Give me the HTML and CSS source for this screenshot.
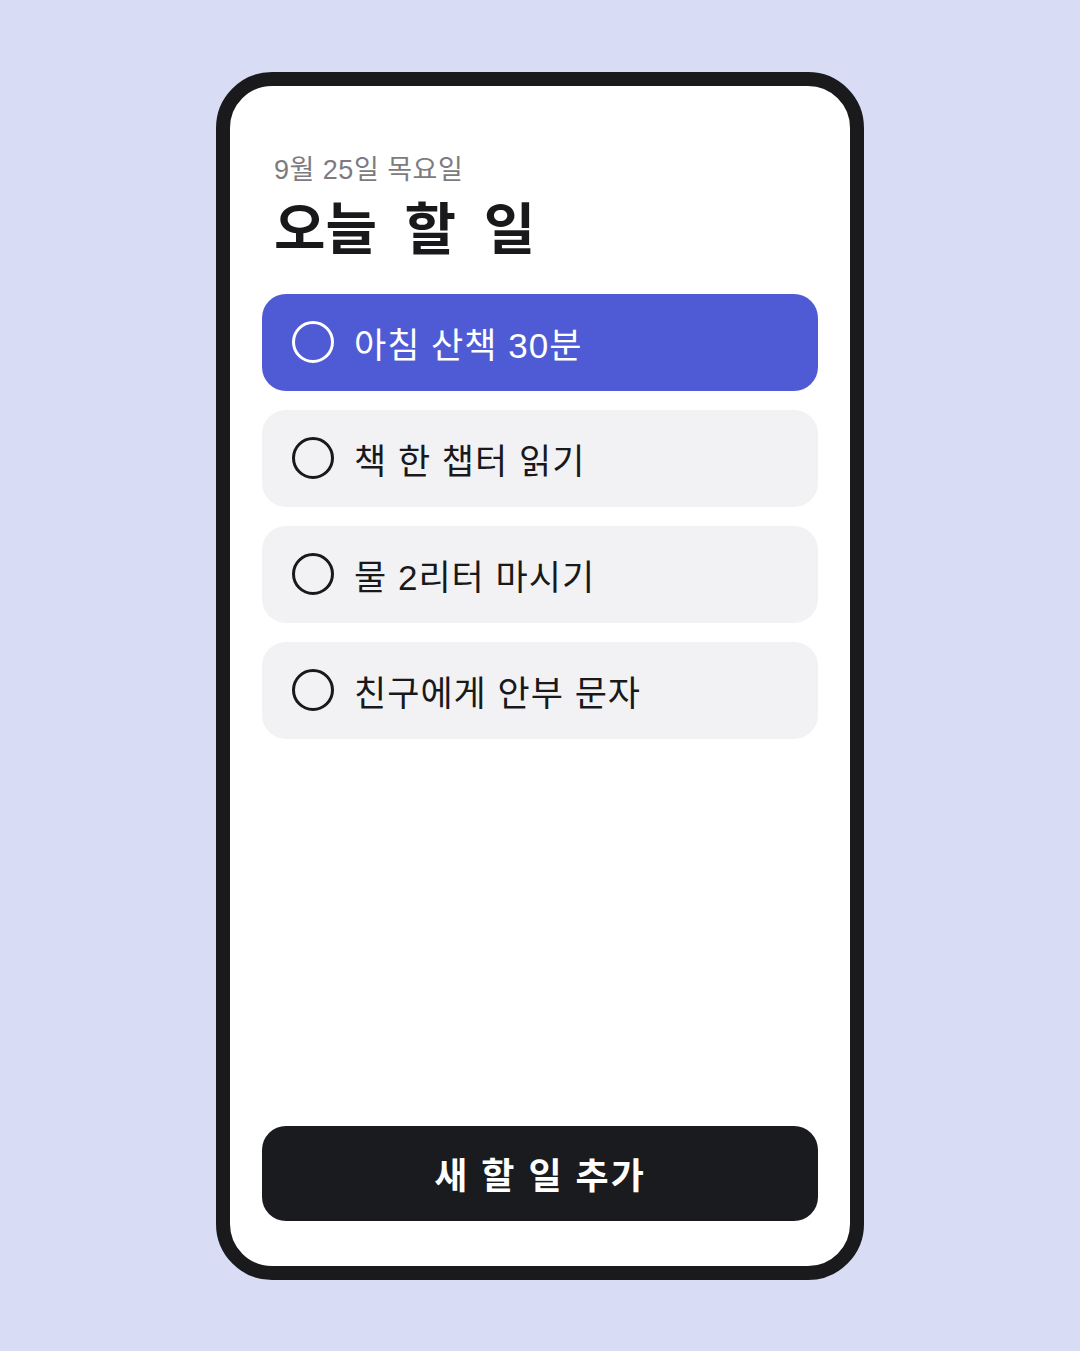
FILE: index.html
```html
<!DOCTYPE html>
<html lang="ko">
<head>
  <meta charset="UTF-8" />
  <meta name="viewport" content="width=device-width, initial-scale=1.0"/>
  <title>오늘 할 일</title>
  <link rel="stylesheet" href="styles.css">
</head>
<body>

  <!-- Phone frame -->
  <div class="phone">
    <div class="header">
      <div class="date">9월 25일 목요일</div>
      <h1 class="title">오늘 할 일</h1>
    </div>

    <!-- Todo list -->
    <ul class="todos">
      <li class="todo active"><span class="check"></span>아침 산책 30분</li>
      <li class="todo"><span class="check"></span>책 한 챕터 읽기</li>
      <li class="todo"><span class="check"></span>물 2리터 마시기</li>
      <li class="todo"><span class="check"></span>친구에게 안부 문자</li>
    </ul>

    <button class="add-btn">새 할 일 추가</button>
  </div>

</body>
</html>
```

FILE: styles.css
```css
body {
  font-family: "Liberation Sans", "Noto Sans CJK KR", sans-serif;
  display: flex;
  justify-content: center;
  align-items: center;
  height: 100vh;
  margin: 0;
  background: #d8dcf5;
  overflow: hidden;
}

.phone {
  box-sizing: border-box;
  width: 648px;
  height: 1208px;
  background: #fff;
  border: 14px solid #1a1a1c;
  border-radius: 56px;
  padding: 68px 32px 45px;
  display: flex;
  flex-direction: column;
}

.header {
  padding-left: 12px;
  margin-bottom: 32px;
}
.date {
  font-size: 27px;
  letter-spacing: 0.5px;
  color: #7b7b80;
  line-height: 32px;
}
.title {
  margin: 12px 0 0;
  font-size: 56px;
  font-weight: bold;
  color: #19191b;
  line-height: 64px;
  word-spacing: 12px;
}

.todos {
  list-style: none;
  margin: 0;
  padding: 0;
  display: flex;
  flex-direction: column;
  gap: 19px;
}
.todo {
  height: 97px;
  box-sizing: border-box;
  padding: 0 30px;
  border-radius: 24px;
  background: #f2f2f4;
  display: flex;
  align-items: center;
  gap: 20px;
  font-size: 35px;
  letter-spacing: 1px;
  color: #19191b;
}
.todo.active {
  background: #4f5bd5;
  color: #fff;
}
.check {
  box-sizing: border-box;
  width: 42px;
  height: 42px;
  border: 3.5px solid currentColor;
  border-radius: 50%;
  flex-shrink: 0;
}

.add-btn {
  margin-top: auto;
  height: 95px;
  border: none;
  border-radius: 24px;
  background: #1a1b1e;
  color: #fff;
  font-family: inherit;
  font-size: 36px;
  font-weight: bold;
  letter-spacing: 2px;
  cursor: pointer;
}
```
